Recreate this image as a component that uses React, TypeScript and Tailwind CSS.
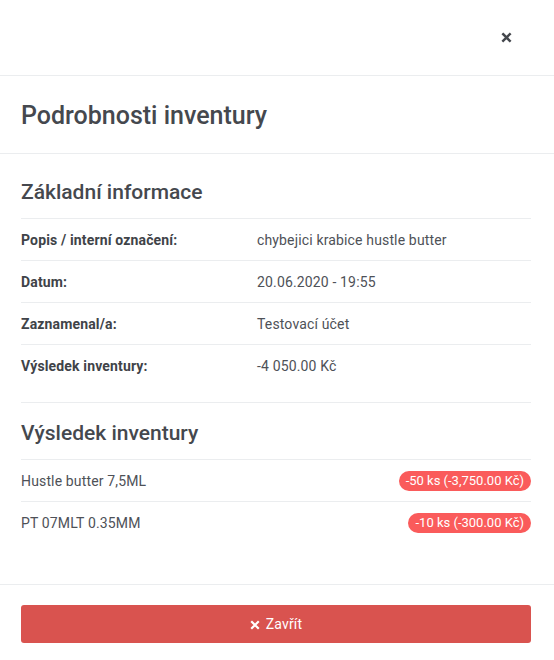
import React from 'react'

const info = [
    { label: 'Popis / interní označení:', value: 'chybejici krabice hustle butter' },
    { label: 'Datum:', value: '20.06.2020 - 19:55' },
    { label: 'Zaznamenal/a:', value: 'Testovací účet' },
    { label: 'Výsledek inventury:', value: '-4 050.00 Kč' },
]

const items = [
    { name: 'Hustle butter 7,5ML', diff: '-50 ks (-3,750.00 Kč)' },
    { name: 'PT 07MLT 0.35MM', diff: '-10 ks (-300.00 Kč)' },
]

function CloseIcon({ className }: { className?: string }) {
    return (
        <svg viewBox="0 0 10 10" className={className} fill="none" stroke="currentColor" strokeWidth="2.2" strokeLinecap="square">
            <path d="M2 2L8 8M8 2L2 8" />
        </svg>
    )
}

export default function App() {
    return (
        <div className="w-[554px] h-[660px] bg-white text-[#4a4d53] font-['Roboto',sans-serif] flex flex-col">
            <div className="h-[76px] shrink-0 border-b border-[#ebedef] flex items-center justify-end pr-[42px]">
                <button className="text-[#44474d]">
                    <CloseIcon className="w-[11px] h-[11px]" />
                </button>
            </div>

            <div className="h-[78px] shrink-0 border-b border-[#ebedef] flex items-center pl-[21px] pr-[23px] pt-[3px]">
                <h2 className="text-[25px] leading-[28px] font-medium text-[#45484e]">Podrobnosti inventury</h2>
            </div>

            <div className="pl-[21px] pr-[23px] flex-1 tracking-[0.15px]">
                <h4 className="text-[21px] leading-[24px] font-medium tracking-normal text-[#45484e] mt-[26px] mb-[14px]">Základní informace</h4>
                <div className="text-[14px]">
                    {info.map((row) => (
                        <div key={row.label} className="flex h-[42px] items-center border-t border-[#ebedef] pt-[2px]">
                            <div className="w-[236px] font-bold text-[#404348]">{row.label}</div>
                            <div className="text-[#4e5157]">{row.value}</div>
                        </div>
                    ))}
                </div>
                <hr className="mt-[16px] border-t border-[#ebedef]" />
                <h4 className="text-[21px] leading-[24px] font-medium tracking-normal text-[#45484e] mt-[18px] mb-[14px]">Výsledek inventury</h4>
                <div className="text-[14px]">
                    {items.map((item) => (
                        <div key={item.name} className="flex h-[42px] items-center justify-between border-t border-[#ebedef] pt-[1px]">
                            <span className="text-[#4e5157]">{item.name}</span>
                            <span className="bg-[#fa5b5b] text-white text-[13px] leading-[20px] tracking-normal rounded-full px-[7px]">{item.diff}</span>
                        </div>
                    ))}
                </div>
            </div>

            <div className="h-[76px] shrink-0 border-t border-[#ebedef] pl-[21px] pr-[23px] pt-[20px]">
                <button className="w-full h-[38px] rounded-[3px] bg-[#d9534f] text-white text-[14px] tracking-[0.15px] flex items-center justify-center gap-[6px] pt-[1px]">
                    <CloseIcon className="w-[10px] h-[10px]" />
                    Zavřít
                </button>
            </div>
        </div>
    )
}
